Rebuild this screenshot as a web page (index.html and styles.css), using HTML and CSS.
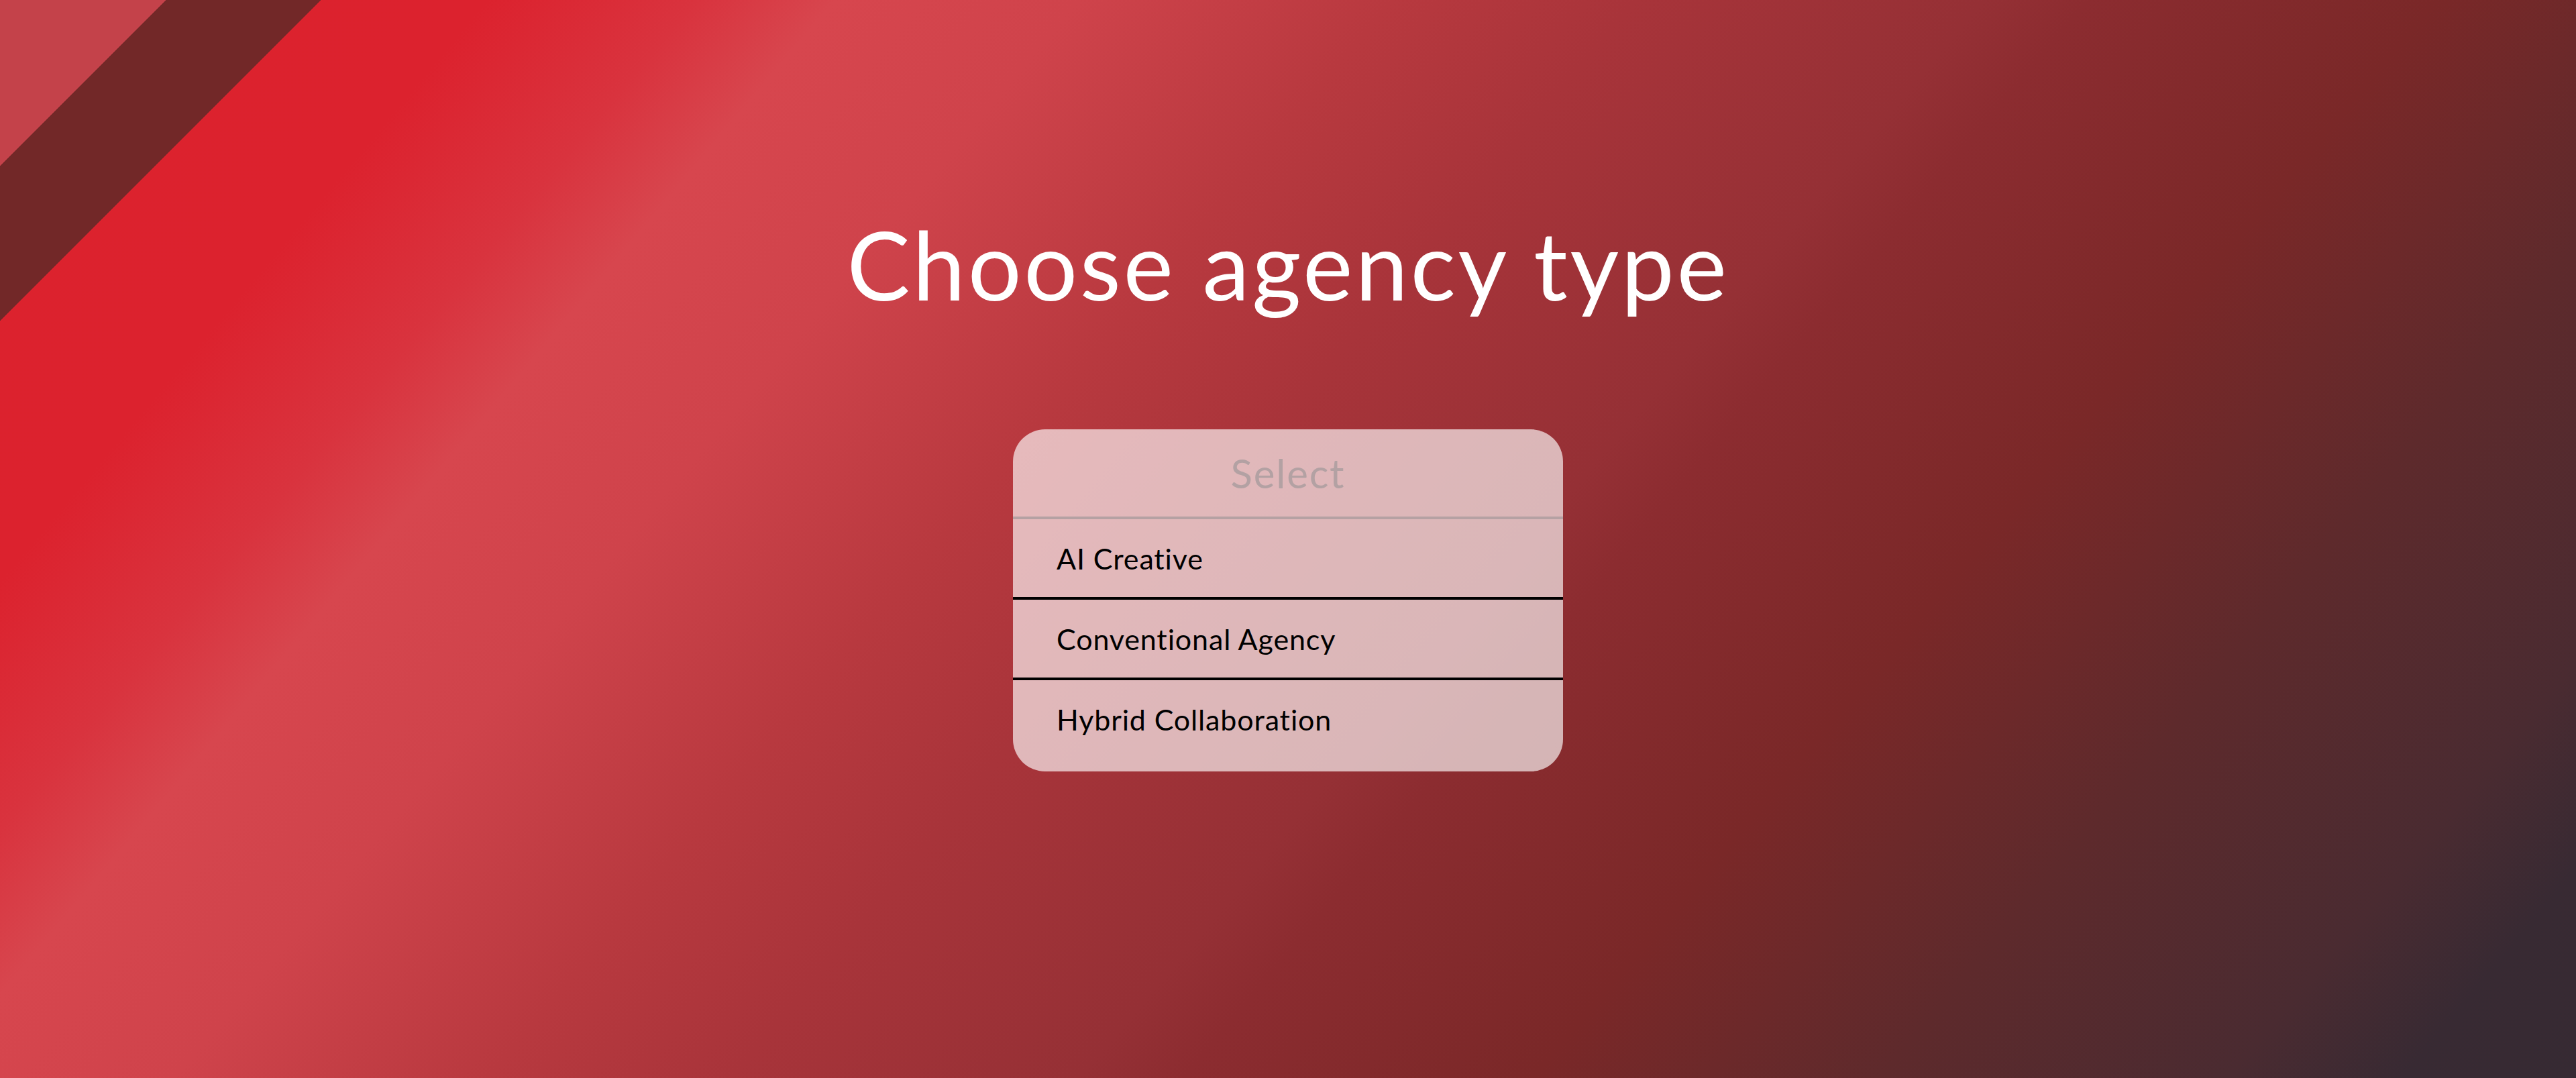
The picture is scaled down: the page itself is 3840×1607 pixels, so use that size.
FILE: index.html
```html
<!DOCTYPE html>
<html lang="en">
<head>
<meta charset="utf-8">
<title>Choose agency type</title>
<link rel="stylesheet" href="styles.css">
</head>
<body>
<main class="page">
  <h1 class="title">Choose agency type</h1>
  <div class="select">
    <div class="select-head">Select</div>
    <ul class="options">
      <li class="option">AI Creative</li>
      <li class="option">Conventional Agency</li>
      <li class="option">Hybrid Collaboration</li>
    </ul>
  </div>
</main>
</body>
</html>
```

FILE: styles.css
```css
html, body {
  margin: 0;
  padding: 0;
}

body {
  width: 3840px;
  height: 1607px;
  overflow: hidden;
  font-family: "Lato", "Inter", "Noto Sans", sans-serif;
  font-variant-ligatures: none;
  font-feature-settings: "liga" 0, "clig" 0;
  background:
    linear-gradient(135deg, #c4424a 0 175px, #722828 175px 338px, rgba(0,0,0,0) 338px),
    linear-gradient(130deg,
      #dc222d 0%,
      #dc222e 14%,
      #d9333e 20%,
      #d7464e 24%,
      #cf434b 31%,
      #b8393f 40%,
      #a8343a 47%,
      #953035 57%,
      #8c2c30 60%,
      #7a2828 70%,
      #5e2a2c 80%,
      #4a2b31 90%,
      #382a33 95%,
      #362a33 100%);
}

.page {
  box-sizing: border-box;
  height: 1607px;
  display: flex;
  flex-direction: column;
  align-items: center;
  padding-top: 309px;
}

.title {
  margin: 0;
  font-size: 141px;
  font-weight: 400;
  line-height: 1.2;
  color: #ffffff;
  letter-spacing: 0.026em;
}

.select {
  margin-top: 162px;
  width: 820px;
  border-radius: 48px;
  background: rgba(255, 255, 255, 0.65);
  padding-bottom: 20px;
  overflow: hidden;
}

.select-head {
  height: 130px;
  display: flex;
  align-items: center;
  justify-content: center;
  font-size: 60px;
  letter-spacing: 0.03em;
  color: #b3a1a3;
  border-bottom: 4px solid #b5a1a3;
}

.options {
  list-style: none;
  margin: 0;
  padding: 0;
}

.option {
  height: 116px;
  display: flex;
  align-items: center;
  padding-left: 65px;
  font-size: 43px;
  letter-spacing: 0.02em;
  color: #000000;
}

.option + .option {
  border-top: 4px solid #000000;
}
```
